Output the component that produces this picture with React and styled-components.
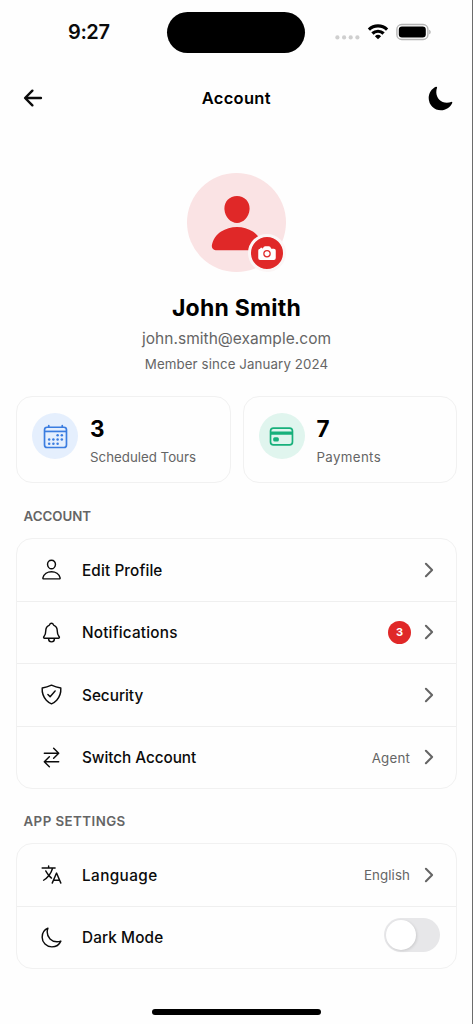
import React from "react";
import styled, { createGlobalStyle } from "styled-components";
import {
  IoArrowBack,
  IoCalendarOutline,
  IoCamera,
  IoCardOutline,
  IoChevronForward,
  IoLanguageOutline,
  IoMoon,
  IoMoonOutline,
  IoNotificationsOutline,
  IoPerson,
  IoPersonOutline,
  IoShieldCheckmarkOutline,
  IoSwapHorizontalOutline,
} from "react-icons/io5";

const GlobalStyle = createGlobalStyle`
  *, *::before, *::after { box-sizing: border-box; }
  body {
    margin: 0;
    background: #fefefe;
    color: #0b0b0b;
    font-family: Inter, "Liberation Sans", sans-serif;
  }
  svg { display: block; flex: none; }
`;

const Screen = styled.div`
  height: 1024px;
  display: flex;
  flex-direction: column;
  border-right: 1px solid #6c6c6c;
  background: #fefefe;
  overflow: hidden;
`;

const StatusBar = styled.div`
  height: 65px;
  flex: none;
  display: grid;
  grid-template-columns: 167px 138px 1fr;
`;

const Clock = styled.div`
  padding: 20px 0 0 68px;
  font-size: 20px;
  line-height: 25px;
  font-weight: 570;
  letter-spacing: ${(p) => p.$track}px;
`;

const Island = styled.div`
  height: 41px;
  margin-top: 12px;
  border-radius: 21px;
  background: #000;
`;

const StatusIcons = styled.div`
  display: flex;
  align-items: flex-start;
  padding: 23px 0 0 30px;
`;

const Header = styled.header`
  height: 66px;
  flex: none;
  display: flex;
  align-items: center;
  justify-content: space-between;
  padding: 0 18.5px 0 20px;
`;

const Title = styled.h1`
  margin: 0;
  font-size: 16.5px;
  line-height: 22px;
  font-weight: 600;
  color: #000;
  letter-spacing: ${(p) => p.$track}px;
`;

const Profile = styled.section`
  flex: none;
  height: 265px;
  padding: 42px 0 0 1px;
  display: flex;
  flex-direction: column;
  align-items: center;
`;

const Avatar = styled.div`
  position: relative;
  width: 99px;
  height: 99px;
  border-radius: 50%;
  background: #fae3e4;
  color: #e02828;
  display: flex;
  align-items: center;
  justify-content: center;
`;

const CameraBadge = styled.div`
  position: absolute;
  right: 0;
  bottom: 0;
  width: 38px;
  height: 38px;
  border: 3px solid #fbf6f6;
  border-radius: 50%;
  background: #e02828;
  color: #fff;
  display: flex;
  align-items: center;
  justify-content: center;
`;

const Name = styled.div`
  margin-top: 20px;
  font-size: 23px;
  line-height: 32px;
  font-weight: 680;
  color: #000;
  letter-spacing: ${(p) => p.$track}px;
`;

const Email = styled.div`
  margin-top: 4px;
  font-size: 15.5px;
  line-height: 22px;
  color: #656565;
  letter-spacing: ${(p) => p.$track}px;
`;

const Since = styled.div`
  margin-top: 5px;
  font-size: 13.3px;
  line-height: 18px;
  color: #656565;
  letter-spacing: ${(p) => p.$track}px;
`;

const Stats = styled.div`
  flex: none;
  display: grid;
  grid-template-columns: 1fr 1fr;
  gap: 12px;
  padding: 0 15px 0 16px;
`;

const StatCard = styled.div`
  height: 87px;
  border: 1px solid #f1f1f1;
  border-radius: 16px;
  display: flex;
  align-items: flex-start;
  gap: 12px;
  padding: 16px 15px;
`;

const StatIcon = styled.div`
  width: 46px;
  height: 46px;
  flex: none;
  border-radius: 50%;
  display: flex;
  align-items: center;
  justify-content: center;
  color: ${(p) => p.$color};
  background: ${(p) => p.$tint};
`;

const StatValue = styled.div`
  font-size: 22.5px;
  line-height: 30px;
  margin-top: 1px;
  font-weight: 700;
  color: #000;
`;

const StatLabel = styled.div`
  margin-top: 5px;
  font-size: 13.3px;
  line-height: 17px;
  color: #656565;
  white-space: nowrap;
  letter-spacing: ${(p) => p.$track}px;
`;

const SectionTitle = styled.h2`
  flex: none;
  height: ${(p) => p.$height}px;
  margin: 0;
  padding: 0 0 12px 23.5px;
  display: flex;
  align-items: flex-end;
  font-size: 13.3px;
  line-height: 19px;
  font-weight: 600;
  color: #656565;
  letter-spacing: ${(p) => p.$track}px;
`;

const Group = styled.div`
  flex: none;
  height: ${(p) => p.$height}px;
  margin: 0 15px 0 16px;
  border: 1px solid #f1f1f1;
  border-radius: 16px;
  display: flex;
  flex-direction: column;
`;

const Row = styled.div`
  flex: 1;
  display: flex;
  align-items: center;
  padding: 0 16px 0 23px;

  & + & {
    border-top: 1px solid #efefef;
  }
`;

const RowLabel = styled.div`
  flex: 1;
  padding: 1.5px 0 0 19px;
  font-size: 15.3px;
  line-height: 20px;
  font-weight: 450;
  letter-spacing: ${(p) => p.$track}px;
`;

const RowValue = styled.div`
  padding-top: 1px;
  margin-right: 8px;
  font-size: 13.3px;
  line-height: 18px;
  color: #656565;
  letter-spacing: ${(p) => p.$track}px;
`;

const Count = styled.div`
  width: 23px;
  height: 23px;
  margin-right: 7px;
  border-radius: 50%;
  background: #e02828;
  color: #fff;
  font-size: 11px;
  font-weight: 700;
  line-height: 23px;
  text-align: center;
`;

const Chevron = styled(IoChevronForward)`
  width: 22px;
  height: 22px;
  color: #656565;
`;

const Toggle = styled.div`
  width: 56px;
  height: 34px;
  margin-top: -5px;
  padding: 2px;
  border-radius: 17px;
  background: #e7e7e9;
`;

const Knob = styled.div`
  width: 30px;
  height: 30px;
  border-radius: 50%;
  background: #fff;
  box-shadow: 1px 1px 3px rgba(0, 0, 0, 0.12);
`;

const HomeIndicator = styled.div`
  flex: none;
  width: 169px;
  height: 6px;
  margin: 40px 0 0 152px;
  border-radius: 3px;
  background: #000;
`;

const WifiGlyph = styled.svg`
  margin-left: 7px;
`;

const BatteryGlyph = styled.svg`
  margin-left: 7px;
`;

const Signal = () => (
  <svg width="25" height="20" viewBox="0 0 25 20" fill="#cfcfcf">
    <circle cx="2.4" cy="14.4" r="2.1" />
    <circle cx="9.1" cy="14.4" r="2.1" />
    <circle cx="15.7" cy="14.4" r="2.1" />
    <circle cx="22.4" cy="14.4" r="2.1" />
  </svg>
);

const Wifi = () => (
  <WifiGlyph width="22" height="18" viewBox="0 0 22 18">
    <g fill="none" stroke="#000" strokeWidth="3.2">
      <path d="M1.9 6.6a13.2 13.2 0 0 1 18.2 0" />
      <path d="M5.4 10.5a8.1 8.1 0 0 1 11.2 0" />
    </g>
    <path d="M11 16.2L7.9 13.2a4.5 4.5 0 0 1 6.2 0z" fill="#000" />
  </WifiGlyph>
);

const Battery = () => (
  <BatteryGlyph width="36" height="18" viewBox="0 0 36 18">
    <rect x="0.9" y="1.5" width="31" height="15" rx="4.8" fill="none" stroke="#b5b5b5" strokeWidth="1.4" />
    <rect x="2.8" y="3.5" width="27" height="11" rx="3.2" fill="#000" />
    <path d="M33.2 6.7c2 .7 2 3.9 0 4.6z" fill="#b5b5b5" />
  </BatteryGlyph>
);

const stats = [
  { value: "3", label: "Scheduled Tours", icon: IoCalendarOutline, color: "#3b7de0", tint: "#e5effd", track: 0 },
  { value: "7", label: "Payments", icon: IoCardOutline, color: "#17b07b", tint: "#e0f5ee", track: 0.35 },
];

const accountRows = [
  { label: "Edit Profile", icon: IoPersonOutline, track: 0.12 },
  { label: "Notifications", icon: IoNotificationsOutline, count: 3, track: 0.2 },
  { label: "Security", icon: IoShieldCheckmarkOutline, track: 0 },
  { label: "Switch Account", icon: IoSwapHorizontalOutline, value: "Agent", track: -0.05, valueTrack: 0.2 },
];

const settingRows = [
  { label: "Language", icon: IoLanguageOutline, value: "English", track: 0.4, valueTrack: 0.1 },
  { label: "Dark Mode", icon: IoMoonOutline, toggle: true, track: 0.12 },
];

function SettingRow({ label, icon: Icon, track, value, valueTrack, count, toggle }) {
  return (
    <Row>
      <Icon size={23} />
      <RowLabel $track={track}>{label}</RowLabel>
      {value && <RowValue $track={valueTrack}>{value}</RowValue>}
      {count && <Count>{count}</Count>}
      {toggle ? (
        <Toggle>
          <Knob />
        </Toggle>
      ) : (
        <Chevron />
      )}
    </Row>
  );
}

export default function App() {
  return (
    <>
      <GlobalStyle />
      <Screen>
        <StatusBar>
          <Clock $track={-0.4}>9:27</Clock>
          <Island />
          <StatusIcons>
            <Signal />
            <Wifi />
            <Battery />
          </StatusIcons>
        </StatusBar>
        <Header>
          <IoArrowBack size={26} />
          <Title $track={0.3}>Account</Title>
          <IoMoon size={27} color="#000" />
        </Header>
        <Profile>
          <Avatar>
            <IoPerson size={62} />
            <CameraBadge>
              <IoCamera size={20} />
            </CameraBadge>
          </Avatar>
          <Name $track={0.25}>John Smith</Name>
          <Email $track={0.03}>john.smith@example.com</Email>
          <Since $track={0.1}>Member since January 2024</Since>
        </Profile>
        <Stats>
          {stats.map(({ value, label, icon: Icon, color, tint, track }) => (
            <StatCard key={label}>
              <StatIcon $color={color} $tint={tint}>
                <Icon size={27} />
              </StatIcon>
              <div>
                <StatValue>{value}</StatValue>
                <StatLabel $track={track}>{label}</StatLabel>
              </div>
            </StatCard>
          ))}
        </Stats>
        <SectionTitle $height={55} $track={0}>ACCOUNT</SectionTitle>
        <Group $height={251}>
          {accountRows.map((row) => (
            <SettingRow key={row.label} {...row} />
          ))}
        </Group>
        <SectionTitle $height={54} $track={0.45}>APP SETTINGS</SectionTitle>
        <Group $height={126}>
          {settingRows.map((row) => (
            <SettingRow key={row.label} {...row} />
          ))}
        </Group>
        <HomeIndicator />
      </Screen>
    </>
  );
}
